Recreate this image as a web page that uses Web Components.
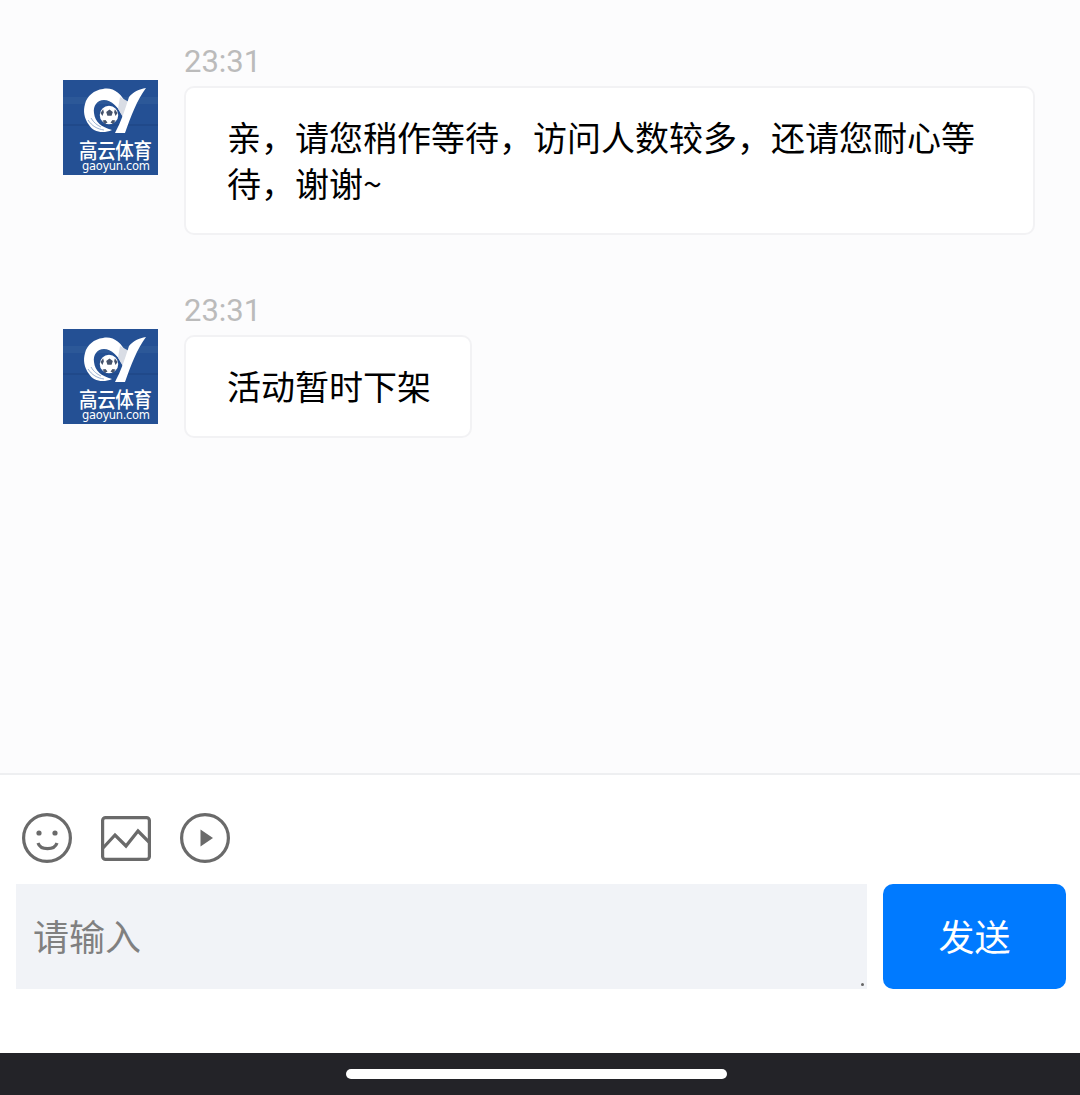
<!DOCTYPE html>
<html lang="zh">
<head>
<meta charset="utf-8">
<title>chat</title>
<style>
  html, body { margin: 0; height: 100%; }
  body { font-family: "Noto Sans CJK SC", "Noto Sans", sans-serif; background: #fcfcfd; }
</style>
</head>
<body>
<chat-page>
  <chat-message time="23:31">亲，请您稍作等待，访问人数较多，还请您耐心等待，谢谢~</chat-message>
  <chat-message time="23:31">活动暂时下架</chat-message>
</chat-page>

<script>
class BrandAvatar extends HTMLElement {
  constructor() {
    super();
    this.attachShadow({ mode: "open" }).innerHTML = `
      <style>
        :host { display: block; width: 95px; height: 95px; flex: none; }
        svg { display: block; }
        text { fill: #fff; }
      </style>
      <svg width="95" height="95" viewBox="0 0 95 95">
        <rect width="95" height="95" fill="#245094"/>
        <rect y="17" width="95" height="7" fill="#2c5898"/>
        <rect y="44" width="95" height="2" fill="#20498a"/>
        <path fill="#fff" d="M40 9C50 7 58 13 64 25L61 39C56 27 48 20 41 20C34 20 30 26 31 33C32 42 38 47 49 50C40 54 30 52 26 45C21 38 20 31 22 24C24 16 31 10 40 9Z"/>
        <path fill="#d9dde5" d="M57 17L66 22L61 39L55 29Z"/>
        <path fill="#fff" d="M66 17C70 12 76 9 83 8C74 20 68 36 62 53L52 53C58 42 62 30 66 17Z"/>
        <path fill="none" stroke="#7f9ac2" stroke-width=".8" d="M25 40C29 46 34 49 41 50M28 38C31 43 34 45 38 47"/>
        <circle cx="46" cy="35" r="10" fill="#fff" stroke="#245094" stroke-width="1.500"/>
        <path fill="#46536b" d="M46.500 29.500l3.300 2.400-1.200 3.900h-4.200l-1.200-3.900zM37.500 33l2.600-3.800.8 3-1.500 3.800zM54.500 33l-2.600-3.800-.8 3 1.500 3.800zM42 44l-2.500-3.500 3-.5 2 2.500zM50 44l2.500-3.500-3-.5-2 2.500z"/>
        <text transform="translate(16 78) scale(1 1.130)" font-size="18.500" font-weight="500" textLength="73" style="font-family:'Noto Sans CJK SC',sans-serif">高云体育</text>
        <text x="19" y="90" font-size="11.500" font-weight="500" textLength="68" style="font-family:'DejaVu Sans',sans-serif">gaoyun.com</text>
      </svg>
    `;
  }
}

class ChatMessage extends HTMLElement {
  constructor() {
    super();
    this.attachShadow({ mode: "open" }).innerHTML = `
      <style>
        :host { display: flex; align-items: flex-start; gap: 26px; }
        brand-avatar { margin-top: 38px; }
        .body { min-width: 0; flex: 1; display: flex; flex-direction: column; align-items: flex-start; }
        .time {
          height: 44px;
          font: 31px/40px Roboto, sans-serif;
          color: #bbb;
        }
        .bubble {
          padding: 26px 39px 27.500px 41px;
          border: 2px solid #f2f2f4;
          border-radius: 10px;
          background: #fff;
          color: #000;
          font-size: 34px;
          line-height: 45.500px;
        }
      </style>
      <brand-avatar></brand-avatar>
      <div class="body">
        <div class="time"></div>
        <div class="bubble"><slot></slot></div>
      </div>
    `;
  }

  connectedCallback() {
    this.shadowRoot.querySelector(".time").textContent = this.getAttribute("time");
  }
}

class ChatComposer extends HTMLElement {
  constructor() {
    super();
    this.attachShadow({ mode: "open" }).innerHTML = `
      <style>
        :host { display: block; background: #fff; border-top: 2px solid #eeeff1; padding: 38px 14px 64px 16px; }
        .tools { display: flex; gap: 29px; padding-left: 6px; height: 50px; margin-bottom: 21px; }
        .tools svg { display: block; width: 50px; height: 50px; fill: none; stroke: #6a6a6a; stroke-width: 3.200; }
        .row { display: flex; gap: 16px; }
        .input {
          position: relative;
          flex: 1;
          height: 105px;
          padding-left: 17px;
          background: #f1f3f7;
          color: #808080;
          font-size: 36px;
          line-height: 102px;
        }
        .input::after {
          content: "";
          position: absolute;
          right: 3px;
          bottom: 3px;
          width: 3px;
          height: 3px;
          background: #666;
          border-radius: 50%;
        }
        .send {
          width: 183px;
          height: 105px;
          border-radius: 10px;
          background: #007aff;
          color: #fff;
          font-size: 36px;
          line-height: 102px;
          text-align: center;
        }
      </style>
      <div class="tools">
        <svg viewBox="0 0 50 50">
          <circle cx="25" cy="25" r="23.400"/>
          <circle cx="17" cy="20" r="2.600" fill="#6a6a6a" stroke="none"/>
          <circle cx="33" cy="20" r="2.600" fill="#6a6a6a" stroke="none"/>
          <path d="M16 30c2.500 7.500 16.500 7.500 19 0"/>
        </svg>
        <svg viewBox="0 0 50 50">
          <rect x="1.600" y="4.600" width="46.800" height="41.800" rx="3"/>
          <path d="M2 35L14 22L25 33L37 18L49 30"/>
        </svg>
        <svg viewBox="0 0 50 50">
          <circle cx="25" cy="25" r="23.400"/>
          <path d="M20.500 16.500L33 25L20.500 33.500Z" fill="#6a6a6a" stroke="none"/>
        </svg>
      </div>
      <div class="row">
        <div class="input">请输入</div>
        <div class="send">发送</div>
      </div>
    `;
  }
}

class HomeBar extends HTMLElement {
  constructor() {
    super();
    this.attachShadow({ mode: "open" }).innerHTML = `
      <style>
        :host { display: flex; justify-content: center; height: 42px; background: #232328; }
        i { display: block; width: 381px; height: 10px; margin: 16px 7px 0 0; border-radius: 5px; background: #fff; }
      </style>
      <i></i>
    `;
  }
}

class ChatPage extends HTMLElement {
  constructor() {
    super();
    this.attachShadow({ mode: "open" }).innerHTML = `
      <style>
        :host { display: flex; flex-direction: column; height: 100vh; }
        .list { flex: 1; min-height: 0; padding: 42px 45px 0 63px; }
        ::slotted(chat-message) { margin-bottom: 56px; }
      </style>
      <div class="list"><slot></slot></div>
      <chat-composer></chat-composer>
      <home-bar></home-bar>
    `;
  }
}

customElements.define("brand-avatar", BrandAvatar);
customElements.define("chat-message", ChatMessage);
customElements.define("chat-composer", ChatComposer);
customElements.define("home-bar", HomeBar);
customElements.define("chat-page", ChatPage);
</script>
</body>
</html>
